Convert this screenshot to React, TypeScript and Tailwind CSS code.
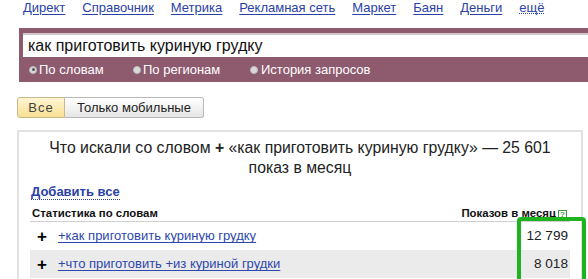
import React from "react";

function Radio({ checked }: { checked?: boolean }) {
  return (
    <span className="relative inline-block w-[8px] h-[8px] rounded-full bg-[#d9d9d9] border border-[#bdbdbd] shrink-0">
      {checked && <span className="absolute left-[1.5px] top-[1.5px] w-[3px] h-[3px] rounded-full bg-[#555]" />}
    </span>
  );
}

export default function App() {
  const nav = ["Директ", "Справочник", "Метрика", "Рекламная сеть", "Маркет", "Баян", "Деньги"];
  return (
    <div className="relative w-[588px] h-[279px] overflow-hidden bg-white font-['Liberation_Sans',Arial,sans-serif] text-[#333]">
      <div className="h-[28px] flex gap-[17px] pl-[23px] text-[13px] leading-[15px]">
        {nav.map((n) => (
          <span key={n} className="text-[#2a41a7] underline underline-offset-[2px]">{n}</span>
        ))}
        <span className="text-[#2a41a7] border-b border-dotted border-[#2a41a7] h-[14px]">ещё</span>
      </div>

      <div className="ml-[19px] h-[54px] bg-[#8e5a6e] pt-[5px]">
        <div className="ml-[4px] h-[24px] bg-white border-t-2 border-[#cfc7cb] pl-[5px] text-[16px] leading-[21px] text-[#111]">
          как приготовить куриную грудку
        </div>
        <div className="h-[25px] flex items-center text-white text-[13px] pl-[10px]">
          <div className="flex items-center gap-[2px] w-[104px]">
            <Radio checked />
            <span>По словам</span>
          </div>
          <div className="flex items-center gap-[2px] w-[117px]">
            <Radio />
            <span>По регионам</span>
          </div>
          <div className="flex items-center gap-[3px]">
            <Radio />
            <span>История запросов</span>
          </div>
        </div>
      </div>

      <div className="mt-[15px] ml-[17px] flex h-[21px] text-[13px] leading-[19px]">
        <div className="w-[48px] border border-[#c9b98a] rounded-l-[3px] bg-gradient-to-b from-[#fff6d2] to-[#f8df95] text-center tracking-[1px] text-[#444]">
          Все
        </div>
        <div className="w-[139px] border border-l-0 border-[#b8b8b8] rounded-r-[3px] bg-gradient-to-b from-[#ffffff] to-[#e6e6e6] text-center text-[#222]">
          Только мобильные
        </div>
      </div>

      <div className="mt-[12px] ml-[17px] w-[566px] h-[200px] border-2 border-b-0 border-[#e3e3e3] pt-[6px]">
        <div className="text-[15.8px] leading-[20px] text-center text-[#222] px-[26px]">
          Что искали со словом <span className="font-bold">+</span> «как приготовить куриную грудку» — 25 601 показ в месяц
        </div>
        <div className="mt-[6px] ml-[12px] leading-[16px] text-[13px]">
          <span className="font-bold text-[#2a41a7] border-b border-dotted border-[#2a41a7]">Добавить все</span>
        </div>
        <div className="ml-[11px] w-[540px] mt-[7px]">
          <div className="h-[15px] flex items-center justify-between text-[11.4px] font-bold text-[#111] border-b border-[#cfcfcf] pl-[2px] pr-[3px]">
            <span>Статистика по словам</span>
            <span className="flex items-center">
              Показов в месяц
              <span className="ml-[2px] w-[9px] h-[9px] border border-[#3a9a3a] text-[#3a9a3a] text-[8px] leading-[7px] flex items-center justify-center font-bold">?</span>
            </span>
          </div>
          <div className="h-[28px] flex items-center text-[13px] pr-[2px]">
            <span className="ml-[7px] w-[21px] font-bold text-[17px] text-black leading-none">+</span>
            <span className="text-[#2d47ad] underline underline-offset-[2px]">+как приготовить куриную грудку</span>
            <span className="ml-auto text-[13.6px] text-[#222]">12 799</span>
          </div>
          <div className="h-[28px] flex items-center text-[13px] pr-[2px] bg-[#ebebeb]">
            <span className="ml-[7px] w-[21px] font-bold text-[17px] text-black leading-none">+</span>
            <span className="text-[#2d47ad] underline underline-offset-[2px]">+что приготовить +из куриной грудки</span>
            <span className="ml-auto text-[13.6px] text-[#222]">8 018</span>
          </div>
        </div>
      </div>

      <div className="absolute left-[517px] top-[217px] w-[69px] h-[70px] border-4 border-[#1fb41f] rounded-[4px]" />
    </div>
  );
}
